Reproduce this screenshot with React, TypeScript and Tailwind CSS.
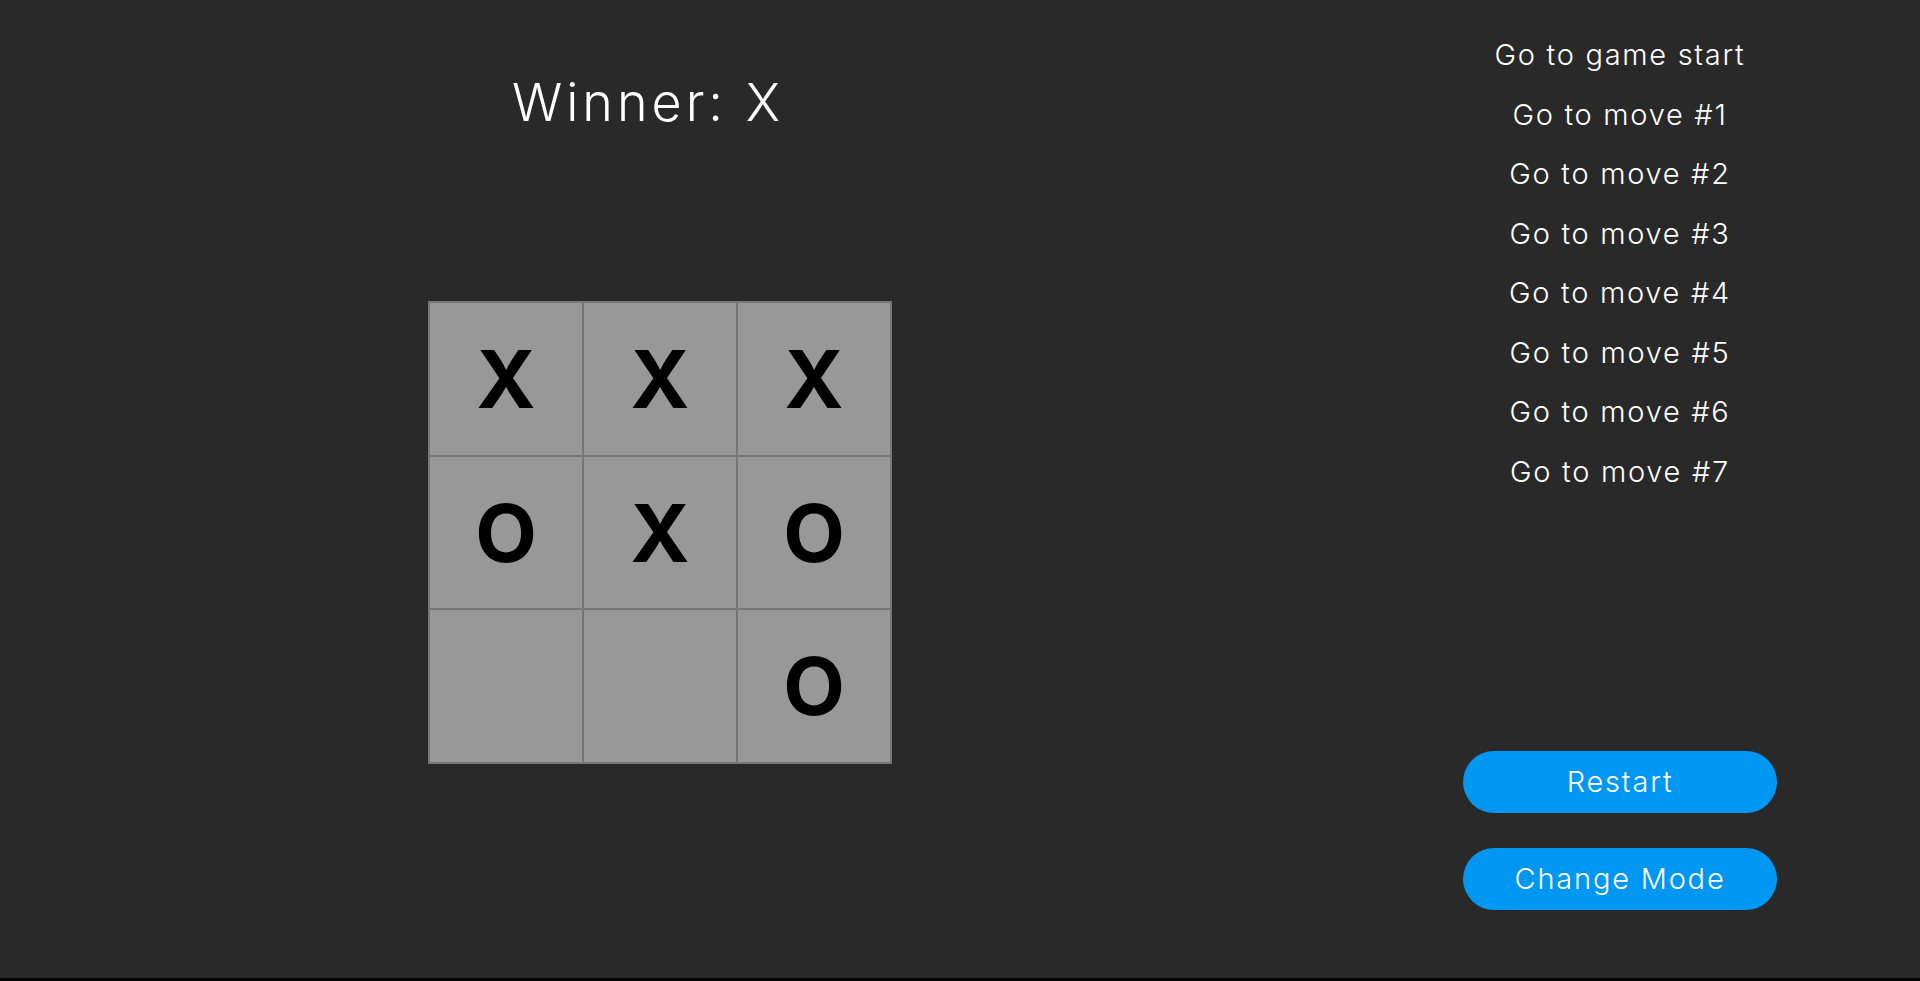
import React from "react";

const cells = ["X", "X", "X", "O", "X", "O", "", "", "O"];
const moves = [
  "Go to game start",
  "Go to move #1",
  "Go to move #2",
  "Go to move #3",
  "Go to move #4",
  "Go to move #5",
  "Go to move #6",
  "Go to move #7",
];

export default function App() {
  return (
    <div className="w-full h-[981px] bg-black">
      <div
        className="flex h-[978px] w-full bg-[#292929] text-white"
        style={{ fontFamily: "Inter, 'Noto Sans', sans-serif" }}
      >
        <div className="flex w-[1320px] flex-col items-center">
          <h1 className="mt-[73px] pr-[24px] text-[52px] font-light leading-[60px] tracking-[4px]">
            Winner: X
          </h1>
          <div className="mt-[168px] grid grid-cols-3 border border-[#777777]">
            {cells.map((c, i) => (
              <div
                key={i}
                className="flex h-[153.7px] w-[154px] items-center justify-center border border-[#777777] bg-[#989898] text-[80px] font-bold leading-none text-black"
              >
                {c}
              </div>
            ))}
          </div>
        </div>
        <div className="flex flex-1 flex-col items-center justify-between pt-[25px] pb-[68px]">
          <ul className="flex flex-col items-center">
            {moves.map((m) => (
              <li key={m}>
                <button className="text-[29px] font-light leading-[59.5px] tracking-[1.7px] text-white">
                  {m}
                </button>
              </li>
            ))}
          </ul>
          <div className="flex flex-col gap-[35px]">
            <button className="h-[62px] w-[314px] rounded-full bg-[#0097f2] text-[29px] font-light tracking-[1.8px] text-white">
              Restart
            </button>
            <button className="h-[62px] w-[314px] rounded-full bg-[#0097f2] text-[29px] font-light tracking-[1.8px] text-white">
              Change Mode
            </button>
          </div>
        </div>
      </div>
    </div>
  );
}
